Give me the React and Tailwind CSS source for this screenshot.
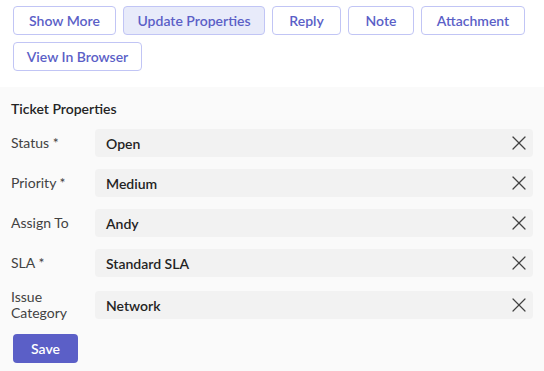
import { X } from 'lucide-react';

const ACTIONS = [
    { label: 'Show More', w: 'w-[103px]' },
    { label: 'Update Properties', w: 'w-[142px]', active: true },
    { label: 'Reply', w: 'w-[69px]' },
    { label: 'Note', w: 'w-[66px]' },
    { label: 'Attachment', w: 'w-[104px]' },
    { label: 'View In Browser', w: 'w-[129px]' },
];

const FIELDS = [
    { label: 'Status *', value: 'Open' },
    { label: 'Priority *', value: 'Medium' },
    { label: 'Assign To', value: 'Andy' },
    { label: 'SLA *', value: 'Standard SLA' },
    { label: 'Issue Category', value: 'Network' },
];

export default function App() {
    return (
        <div className="w-[544px] h-[371px] bg-[#fafafa] text-[14px] text-[#242424]" style={{ fontFamily: 'Lato, "Noto Sans", sans-serif' }}>
            <div className="bg-white flex flex-wrap gap-[7px] px-[13px] pt-[6px] pb-[16px]">
                {ACTIONS.map(a => (
                    <button
                        key={a.label}
                        className={`${a.w} h-[29px] rounded-[4px] border border-[#c1c5f5] font-semibold text-[#5b5fc7] ${a.active ? 'bg-[#e8ebfa]' : 'bg-white'}`}
                    >
                        {a.label}
                    </button>
                ))}
            </div>

            <div className="px-[11px] pt-[13px]">
                <div className="font-semibold leading-[18px] mb-[11px]">Ticket Properties</div>

                <div className="flex flex-col gap-[12px]">
                    {FIELDS.map(f => (
                        <div key={f.label} className="flex items-center">
                            <div className="w-[84px] text-[#424242] leading-[16px] pr-2">{f.label}</div>
                            <div className="flex-1 h-[28px] bg-[#f2f2f2] rounded-[4px] flex items-center justify-between pl-[11px] pr-[2px]">
                                <span className="font-semibold">{f.value}</span>
                                <X size={24} strokeWidth={1.2} className="text-[#424242]" />
                            </div>
                        </div>
                    ))}
                </div>

                <button className="mt-[13px] ml-[2px] w-[65px] h-[29px] rounded-[4px] bg-[#5b5fc7] text-white font-semibold">
                    Save
                </button>
            </div>
        </div>
    );
}
